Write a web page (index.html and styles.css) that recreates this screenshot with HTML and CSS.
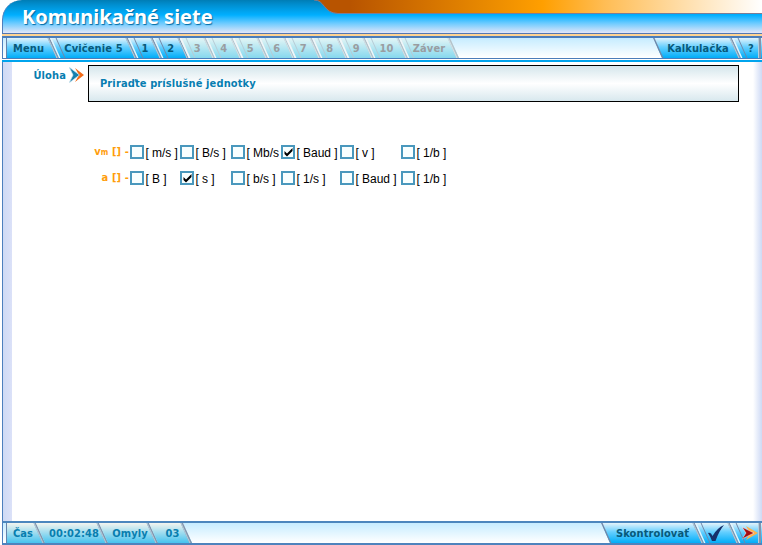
FILE: index.html
```html
<!DOCTYPE html>
<html lang="sk">
<head>
<meta charset="utf-8">
<title>Komunikačné siete</title>
<link rel="stylesheet" href="styles.css">
</head>
<body>
<div class="app">
  <header class="header">
    <svg class="swoosh" width="448" height="14" viewBox="0 0 448 14">
      <defs><linearGradient id="orange"><stop offset="0" stop-color="#b85400"/><stop offset=".08" stop-color="#b85400"/><stop offset=".38" stop-color="#e88900"/><stop offset=".51" stop-color="#ff9f00"/><stop offset=".65" stop-color="#ffbd55"/><stop offset="1" stop-color="#fff"/></linearGradient></defs>
      <path d="M0 0C11 0 9 13 24 13.500H448V0Z" fill="url(#orange)"/>
      <path d="M0 0C11 0 9 13 24 13.500H448" fill="none" stroke="#7c7d96"/>
    </svg>
    <h1>Komunikačné siete</h1>
  </header>
  <div class="rule"></div>
  <nav class="bar top">
    <div class="tabs">
      <span class="tab w-menu">Menu</span><span class="tab w-exercise">Cvičenie 5</span><span class="tab w-one">1</span><span class="tab">2</span>
      <span class="tab off">3</span><span class="tab off">4</span><span class="tab off">5</span><span class="tab off">6</span><span class="tab off">7</span><span class="tab off">8</span><span class="tab off">9</span><span class="tab off w-ten">10</span><span class="tab off last w-end">Záver</span>
    </div>
    <div class="tabs right"><span class="tab first w-calc">Kalkulačka</span><span class="tab w-help">?</span></div>
  </nav>
  <div class="underline"></div>
  <main class="content">
    <div class="task">
      <div class="task-label">Úloha <svg width="16" height="16" viewBox="0 0 16 16"><path d="M6 1l9 7-9 7 4-7z" fill="#f36b18"/><path d="M0 0l10.500 8L0 16l4-8z" fill="#167fae" stroke="#d7eaf2" stroke-width=".7"/></svg></div>
      <div class="task-box">Priraďte príslušné jednotky</div>
    </div>
    <div class="answers">
      <div class="name">v<small>m</small> [] -</div>
      <label><i></i><span>[ m/s ]</span></label><label><i></i><span>[ B/s ]</span></label><label><i></i><span>[ Mb/s</span></label><label><i><svg width="11" height="11" viewBox="0 0 11 11"><path d="M1.500 4v3l2.500 2.500L9.500 4V1L4 6.500z"/></svg></i><span>[ Baud ]</span></label><label><i></i><span>[ v ]</span></label><label><i></i><span>[ 1/b ]</span></label>
      <div class="name">a [] -</div>
      <label><i></i><span>[ B ]</span></label><label><i><svg width="11" height="11" viewBox="0 0 11 11"><path d="M1.500 4v3l2.500 2.500L9.500 4V1L4 6.500z"/></svg></i><span>[ s ]</span></label><label><i></i><span>[ b/s ]</span></label><label><i></i><span>[ 1/s ]</span></label><label><i></i><span>[ Baud ]</span></label><label><i></i><span>[ 1/b ]</span></label>
    </div>
  </main>
  <footer class="bar bottom">
    <div class="tabs">
      <span class="tab info w-time">Čas</span><span class="tab info w-clock">00:02:48</span><span class="tab info w-errors">Omyly</span><span class="tab info last w-count">03</span>
    </div>
    <div class="tabs right"><span class="tab first w-check">Skontrolovať</span><span class="tab w-tick"><svg width="18" height="17" viewBox="0 0 18 17"><path d="M1 8q3-1 4.500 3Q10 3 17 0q-5 6-8.500 16H5Q3 11 1 8Z" fill="#15306b"/></svg></span><span class="tab w-next"><svg width="16" height="14" viewBox="0 0 16 14"><path d="M4 0l12 7-12 7 4-7z" fill="#ffb24a"/><path d="M0 1l12 6L0 13l4-6z" fill="#a50d12" stroke="#fff" stroke-width=".5"/></svg></span></div>
  </footer>
</div>
</body>
</html>
```
FILE: styles.css
```css
* { box-sizing: border-box; }
body { margin: 0; background: #fff; font: bold 11px "DejaVu Sans Condensed", "DejaVu Sans", sans-serif; font-stretch: condensed; letter-spacing: .12px; }
.app { width: 762px; height: 545px; display: flex; flex-direction: column; padding-left: 2px; overflow: hidden; }
.header { position: relative; height: 33px; border-left: 1px solid #4d7fbd; border-radius: 20px 0 0 0; background: linear-gradient(#007db5 0, #008ccc 4px, #00afff 15px, #69caff 23px, #e3e6f8 33px); }
.swoosh { position: absolute; right: 0; top: 0; }
h1 { margin: 0; padding: 5px 0 0 19px; font: bold 20px/24px "Noto Sans", sans-serif; letter-spacing: 0; color: #fff; text-shadow: 1px 1px 1px #006ba5; white-space: nowrap; position: relative; }
.rule { height: 5px; flex: none; background: linear-gradient(#5378b4 0 1px, #ffd391 1px 3px, #4b7dba 3px 5px); }
.bar { display: flex; justify-content: space-between; height: 20px; flex: none; border-left: 1px solid #4d7fbd; background: linear-gradient(#c6ecff, #fff); }
.tabs { display: flex; padding-left: 3px; }
.tab { position: relative; width: 35.500px; margin-right: -9px; height: 20px; flex: none; display: flex; align-items: center; justify-content: center; color: #07597a; background: linear-gradient(#e3f3fb, #65cfff 45%, #00adf8); clip-path: polygon(0 0, calc(100% - 9px) 0, 100% 100%, 9px 100%); }
.tab::after { content: ""; position: absolute; right: 3.500px; top: 0; width: 2.500px; height: 20px; background: #8495ad; transform: skewX(24deg); border-left: 1px solid #b5cedc; }
.tab::before { content: ""; position: absolute; left: 4px; top: 0; width: 4px; height: 20px; transform: skewX(24deg); border-left: 2px solid #e6f5fc; border-right: 1px solid #7187a8; }
.tab:first-child:not(.first) { clip-path: polygon(0 0, calc(100% - 9px) 0, 100% 100%, 0 100%); }
.tab:first-child:not(.first)::before { left: 0; transform: none; width: 1px; border: 0; background: #6583ac; }
.tab.first::before { border-left-color: #7187a8; border-right: 0; }
.off { color: #999da1; background: linear-gradient(#e3f5f5, #86d8ee); }
.off::before { border-left-color: #f3f5f7; border-right-color: #b7cbd5; }
.off::after { background: #b4c2ca; border-left-color: #d5e3e8; }
.info { color: #087eaf; background: linear-gradient(#f3f4ef, #45c3ef); }
.info::before { border: 0; }
.w-menu { width: 53px; padding-right: 8px; }
.w-exercise { width: 87px; }
.w-one { width: 34px; }
.w-ten { width: 43px; }
.w-end { width: 60px; }
.right { padding: 0; }
.w-calc { width: 88px; padding-left: 2px; }
.w-help { width: 30px; margin-right: 0; padding-left: 8px; clip-path: polygon(0 0, 100% 0, 100% 100%, 9px 100%); }
.right .tab:last-child::after { right: 1px; width: 2px; transform: none; }
.underline { height: 4px; flex: none; background: linear-gradient(#4b7dba 0 1px, #fff 1px 2px, #00a4ed 2px 4px); }
.content { flex: 1; border-left: 1px solid #4d7fbd; background: linear-gradient(90deg, #cedaf5 0, #dbe1f8 9px, #fff 9px, #fff 750px, #cedaf5 759px); }
.task { display: flex; padding-top: 3px; }
.task-label { width: 85px; height: 20px; display: flex; align-items: center; justify-content: flex-end; gap: 3px; padding-right: 3px; color: #087eb1; }
.task-box { width: 651px; height: 37px; border: 1px solid #000; padding-left: 11px; line-height: 36px; color: #087eb1; background: linear-gradient(#d5e6ec, #fff 50%, #d8e8ee); }
.answers { display: grid; grid-template-columns: 127px 50px 51px 50px 59px 61px 60px; grid-template-rows: 26px 26px; padding-top: 37px; }
.name { color: #ff9d0b; text-align: right; padding-right: 1px; line-height: 26px; white-space: nowrap; }
.name small { font-size: 8px; }
.answers label { display: flex; align-items: center; gap: 1.500px; font: 12px "Liberation Sans", Arial, sans-serif; letter-spacing: -.05px; color: #000; white-space: nowrap; }
.answers i { width: 14px; height: 14px; flex: none; border: 2px solid #4a98bd; background: #f9ffff; display: grid; place-items: center; }
.answers label span { padding-top: 1px; }
.bottom { height: 24px; border-top: 2px solid #4c86bd; border-bottom: 2px solid #4e83bd; }
.w-time { width: 39px; padding-right: 5px; }
.w-clock { width: 72px; padding-left: 4px; }
.w-errors { width: 59px; padding-left: 3px; }
.w-count { width: 43px; padding-left: 4px; }
.w-check { width: 103px; }
.w-tick { width: 44px; padding-right: 3px; }
.w-next { width: 32px; margin-right: 0; padding-left: 8px; clip-path: polygon(0 0, 100% 0, 100% 100%, 9px 100%); }
```
